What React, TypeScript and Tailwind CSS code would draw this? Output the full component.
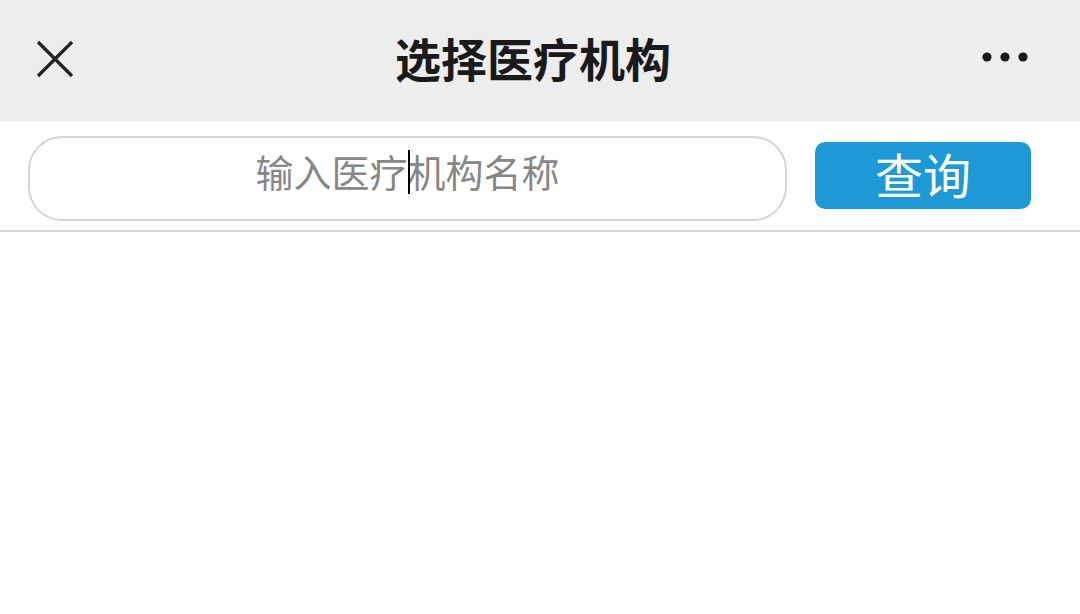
const CJK = { fontFamily: '"Noto Sans CJK SC", "Noto Sans", sans-serif' };

function CloseIcon() {
  return (
    <svg width="40" height="40" viewBox="0 0 40 40" fill="none">
      <path d="M3 3 L37 37 M37 3 L3 37" stroke="#222" strokeWidth="3.2" strokeLinecap="butt" />
    </svg>
  );
}

function MoreIcon() {
  return (
    <svg width="48" height="12" viewBox="0 0 48 12">
      <circle cx="6" cy="6" r="4.6" fill="#1a1a1a" />
      <circle cx="24" cy="6" r="4.6" fill="#1a1a1a" />
      <circle cx="42" cy="6" r="4.6" fill="#1a1a1a" />
    </svg>
  );
}

export default function App() {
  return (
    <div className="flex h-[614px] w-[1080px] flex-col bg-white" style={CJK}>
      {/* top bar */}
      <div className="flex h-[122px] shrink-0 items-center justify-between bg-[#ededed] pl-[35px] pr-[51px]">
        <div className="flex w-[120px] items-center pb-[4px]">
          <CloseIcon />
        </div>
        <div className="pb-[8px] pl-[2px] text-[46px] font-bold leading-none text-[#1a1a1a]">选择医疗机构</div>
        <div className="flex w-[120px] justify-end pb-[8px]">
          <MoreIcon />
        </div>
      </div>

      {/* search row */}
      <div className="flex h-[110px] shrink-0 items-center gap-[28px] border-b-2 border-[#d8d8d8] pl-[28px] pr-[49px]">
        <div className="relative mt-[4px] flex h-[85px] flex-1 items-center justify-center rounded-[34px] border-2 border-[#d4d4d4] pb-[15px]">
          <span className="text-[38px] leading-none text-[#878787]">输入医疗机构名称</span>
          <span className="absolute left-[378px] top-[12px] h-[44px] w-[2px] bg-black" />
        </div>
        <button className="-mt-[2px] flex h-[67px] w-[216px] items-center justify-center rounded-[10px] bg-[#1d9ad6] text-[48px] leading-none text-white">
          <span className="pb-[4px]">查询</span>
        </button>
      </div>

      <div className="flex-1 bg-white" />
    </div>
  );
}
